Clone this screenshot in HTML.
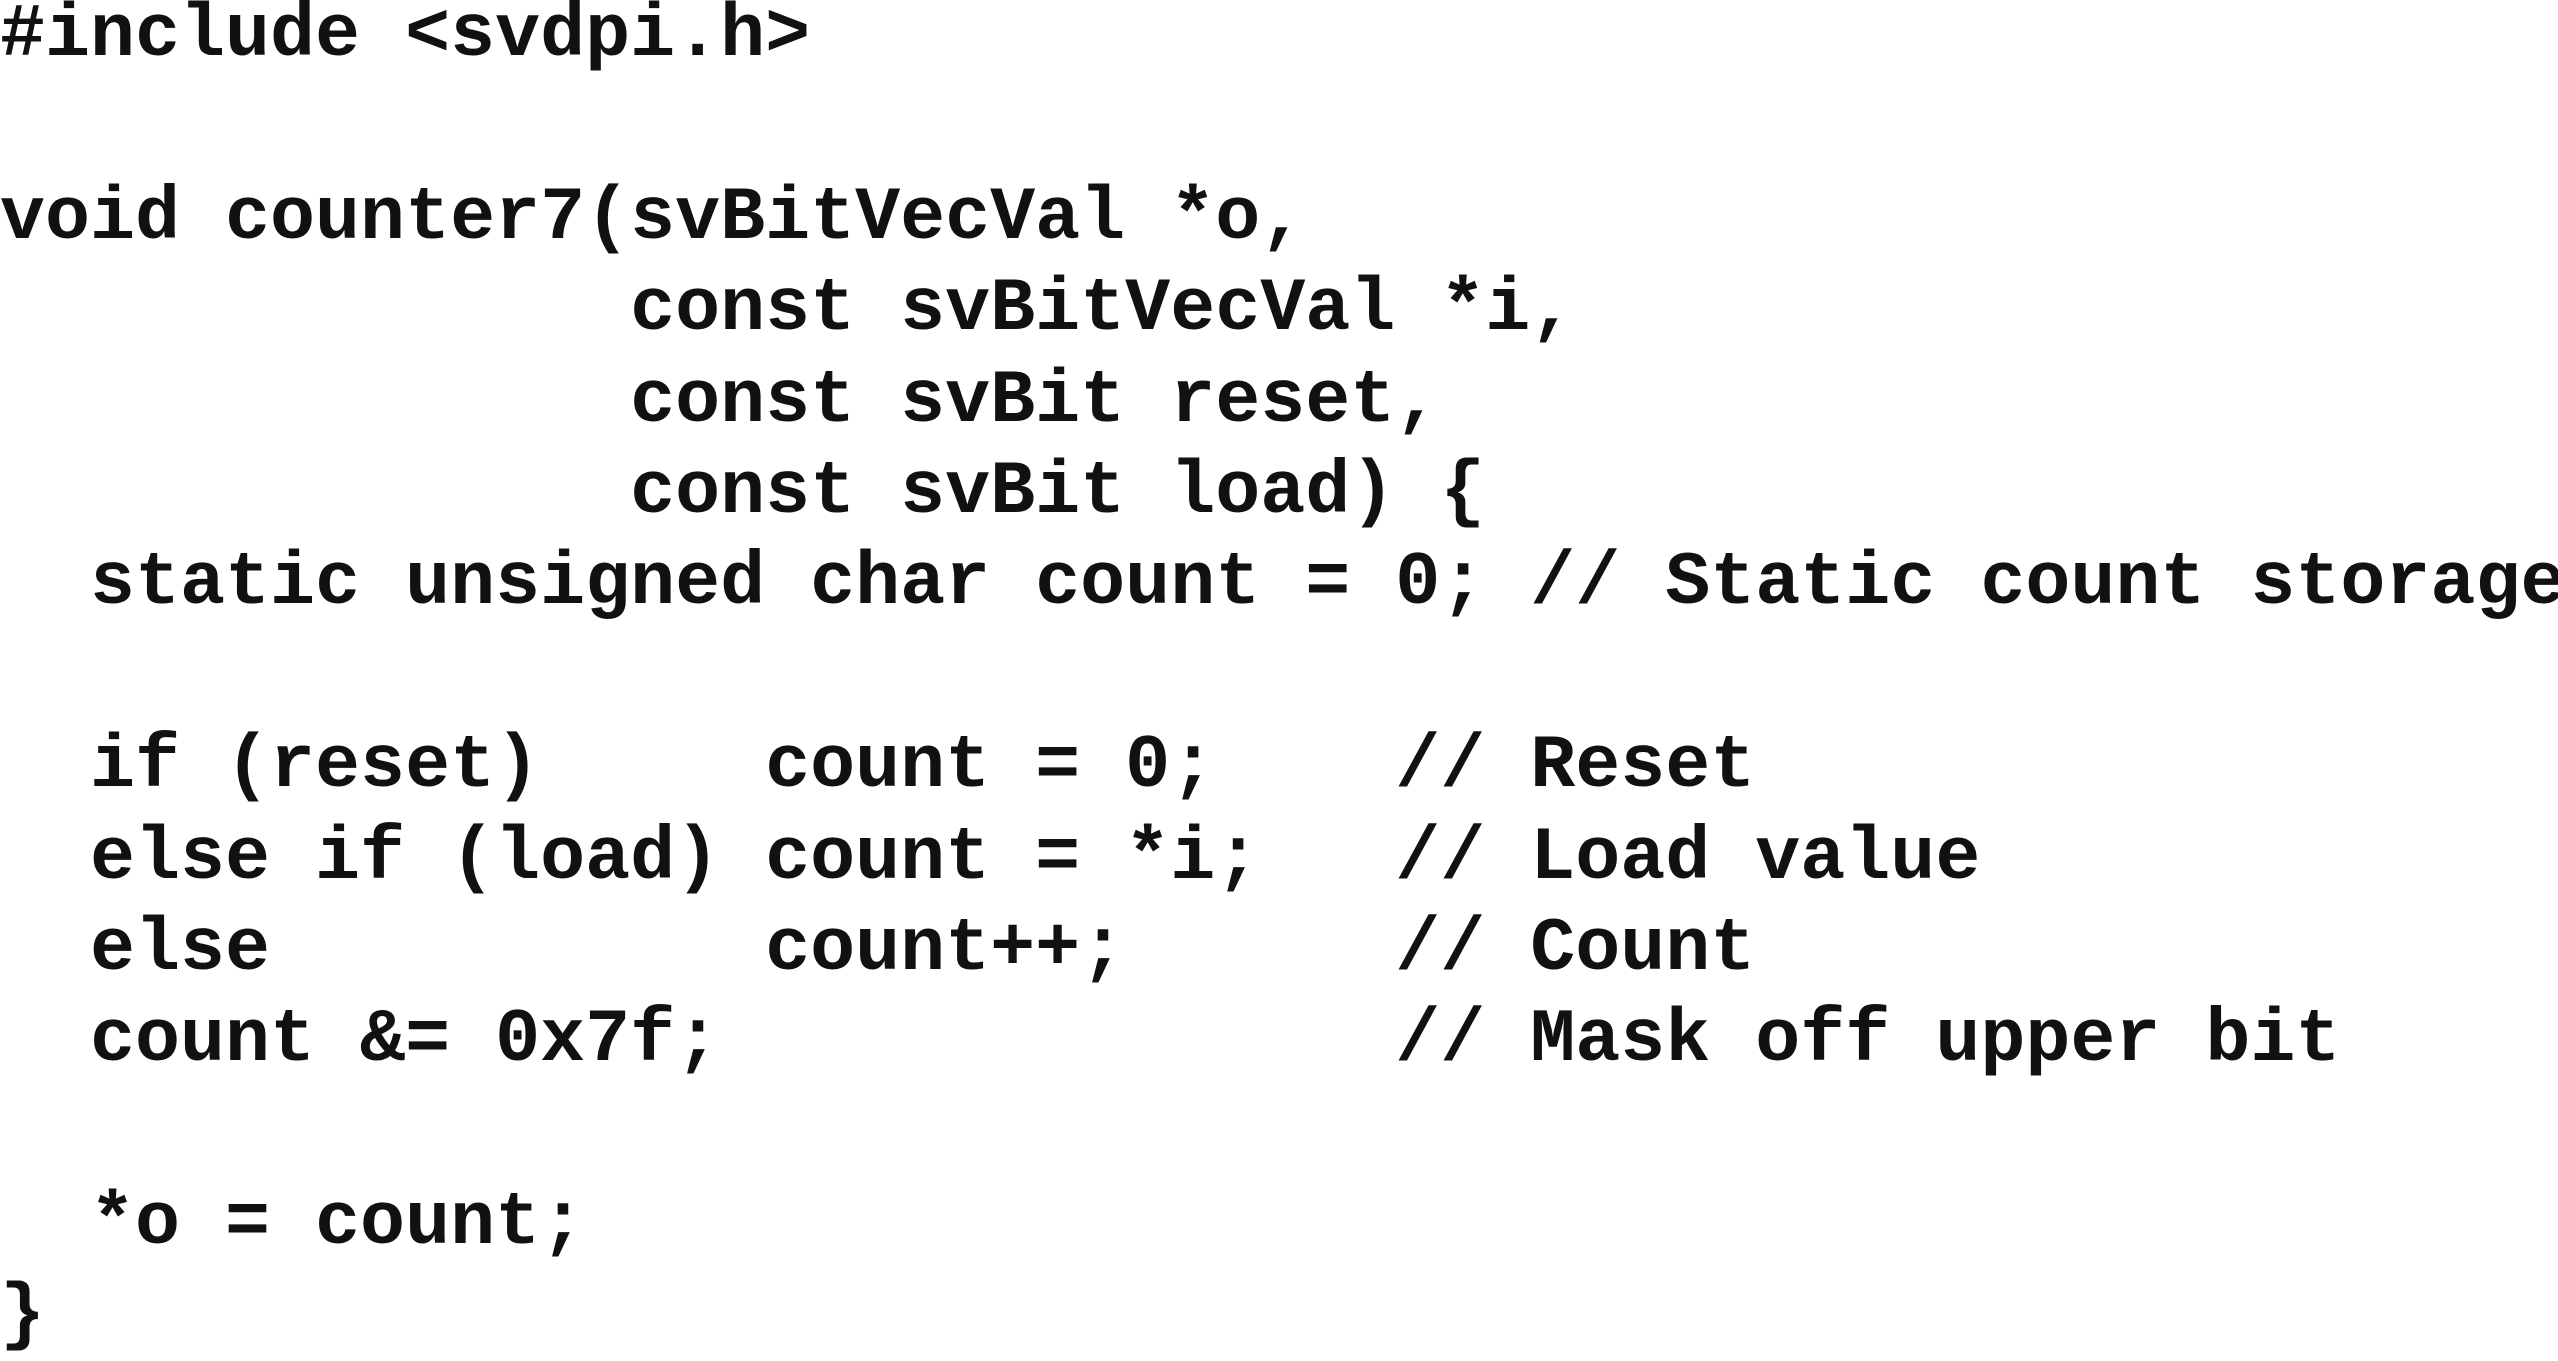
<!DOCTYPE html>
<html><head><meta charset="utf-8"><style>
html,body{margin:0;padding:0;background:#fff;width:2558px;height:1349px;overflow:hidden}
pre{margin:0;position:absolute;left:0;top:-10px;font-family:"Liberation Mono",monospace;font-weight:bold;font-size:75px;line-height:91.4px;color:#111;white-space:pre}
</style></head><body><pre>#include &lt;svdpi.h&gt;

void counter7(svBitVecVal *o,
              const svBitVecVal *i,
              const svBit reset,
              const svBit load) {
  static unsigned char count = 0; // Static count storage

  if (reset)     count = 0;    // Reset
  else if (load) count = *i;   // Load value
  else           count++;      // Count
  count &amp;= 0x7f;               // Mask off upper bit

  *o = count;
}</pre></body></html>
